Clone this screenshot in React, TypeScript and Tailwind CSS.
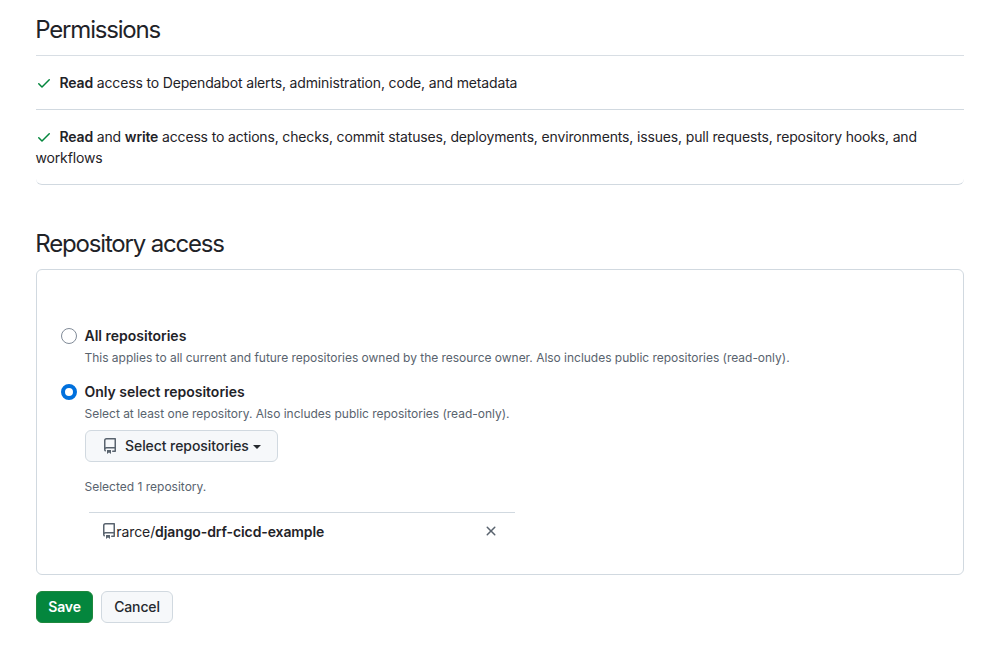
import React from "react";

function Check() {
  return (
    <svg className="mr-2 inline-block h-4 w-4 align-text-bottom text-[#04863d]" viewBox="0 0 16 16" fill="currentColor">
      <path d="M13.78 4.22a.75.75 0 0 1 0 1.06l-7.25 7.25a.75.75 0 0 1-1.06 0L2.22 9.28a.751.751 0 0 1 .018-1.042.751.751 0 0 1 1.042-.018L6 10.94l6.72-6.72a.75.75 0 0 1 1.06 0Z" />
    </svg>
  );
}

function Repo({ className }: { className: string }) {
  return (
    <svg className={className} viewBox="0 0 16 16" fill="currentColor">
      <path d="M2 2.5A2.5 2.5 0 0 1 4.5 0h8.75a.75.75 0 0 1 .75.75v12.5a.75.75 0 0 1-.75.75h-2.5a.75.75 0 0 1 0-1.5h1.75v-2h-8a1 1 0 0 0-.714 1.7.75.75 0 1 1-1.072 1.05A2.495 2.495 0 0 1 2 11.5Zm10.5-1h-8a1 1 0 0 0-1 1v6.708A2.486 2.486 0 0 1 4.5 9h8ZM5 12.25a.25.25 0 0 1 .25-.25h3.5a.25.25 0 0 1 .25.25v3.25a.25.25 0 0 1-.4.2l-1.45-1.087a.249.249 0 0 0-.3 0L5.4 15.7a.25.25 0 0 1-.4-.2Z" />
    </svg>
  );
}

function Cross() {
  return (
    <svg className="h-4 w-4 text-[#59636e]" viewBox="0 0 16 16" fill="currentColor">
      <path d="M3.72 3.72a.75.75 0 0 1 1.06 0L8 6.94l3.22-3.22a.749.749 0 0 1 1.275.326.749.749 0 0 1-.215.734L9.06 8l3.22 3.22a.749.749 0 0 1-.326 1.275.749.749 0 0 1-.734-.215L8 9.06l-3.22 3.22a.751.751 0 0 1-1.042-.018.751.751 0 0 1-.018-1.042L6.94 8 3.72 4.78a.75.75 0 0 1 0-1.06Z" />
    </svg>
  );
}

export default function App() {
  return (
    <main className="h-[672px] w-[986px] bg-white pl-9 pr-[22px] pt-3 font-['Inter',sans-serif] text-sm leading-[21px] text-[#1f2328]">
      <h2 className="h-11 border-b border-[#d8dee4] -indent-[0.7px] text-2xl leading-9 tracking-[-1.2px]">Permissions</h2>
      <ul className="rounded-b-md border-b border-[#d1d9e0] tracking-[-0.158px]">
        <li className="h-[54px] border-b border-[#d1d9e0] pt-4">
          <Check /><b className="-ml-[0.5px] font-semibold">Read</b> access to Dependabot alerts, administration, code, and metadata
        </li>
        <li className="h-[74px] pt-4">
          <Check /><b className="-ml-[0.5px] font-semibold">Read</b> and <b className="font-semibold">write</b> access to actions, checks, commit statuses, deployments, environments, issues, pull requests, repository hooks, and <span className="-ml-[0.5px]">workflows</span>
        </li>
      </ul>
      <h2 className="mt-[41px] -indent-[0.7px] text-2xl leading-9 tracking-[-1.18px]">Repository access</h2>
      <section className="mt-[7px] h-[306px] rounded-md border border-[#d1d9e0] pl-6 pt-14">
        <div className="flex h-14">
          <span className="mt-[2px] h-4 w-4 shrink-0 rounded-full border border-[#818b98]" />
          <div className="ml-[7.5px]">
            <div className="h-[21px] leading-5 font-semibold">All repositories</div>
            <p className="mt-[2px] text-xs leading-[18px] tracking-[-0.023px] text-[#59636e]">This applies to all current and future repositories owned by the resource owner. Also includes public repositories (read-only).</p>
          </div>
        </div>
        <div className="flex">
          <span className="mt-[2px] h-4 w-4 shrink-0 rounded-full border-[4.5px] border-[#0070dd]" />
          <div className="ml-[7.5px]">
            <div className="h-[21px] leading-5 font-semibold">Only select repositories</div>
            <p className="mt-[2px] text-xs leading-[18px] tracking-[-0.015px] text-[#59636e]">Select at least one repository. Also includes public repositories (read-only).</p>
            <button className="ml-[0.5px] mt-[7px] flex h-8 w-[193px] items-center rounded-md border border-[#d1d9e0] bg-[#f6f8fa] pl-4 font-medium tracking-[-0.07px] text-[#25292e]">
              <Repo className="mr-[7px] h-4 w-4 text-[#59636e]" />
              <span className="pb-[2px]">Select repositories</span>
              <span className="ml-1 mt-[2px] border-x-4 border-t-4 border-x-transparent border-t-[#25292e]" />
            </button>
            <p className="mt-4 text-xs leading-[18px] text-[#59636e]">Selected 1 repository.</p>
            <div className="ml-[4px] mt-4 flex h-[38px] w-[426.5px] items-center border-t border-[#d1d9e0] pl-[12.5px] pr-4">
              <Repo className="mb-[2px] h-4 w-4 shrink-0 text-[#59636e]" />
              <span className="-ml-[0.7px] tracking-[-0.1px]">rarce/<b className="font-semibold">django-drf-cicd-example</b></span>
              <button className="mb-[2px] ml-auto" aria-label="Remove repository"><Cross /></button>
            </div>
          </div>
        </div>
      </section>
      <div className="mt-4 flex gap-2">
        <button className="h-8 w-[57px] rounded-md border border-[#1f883d] bg-[#04863d] pb-[2px] font-semibold tracking-[-0.15px] text-white">Save</button>
        <button className="h-8 w-[72px] rounded-md border border-[#d1d9e0] bg-[#f6f8fa] pb-[2px] font-medium tracking-[-0.15px] text-[#25292e]">Cancel</button>
      </div>
    </main>
  );
}
